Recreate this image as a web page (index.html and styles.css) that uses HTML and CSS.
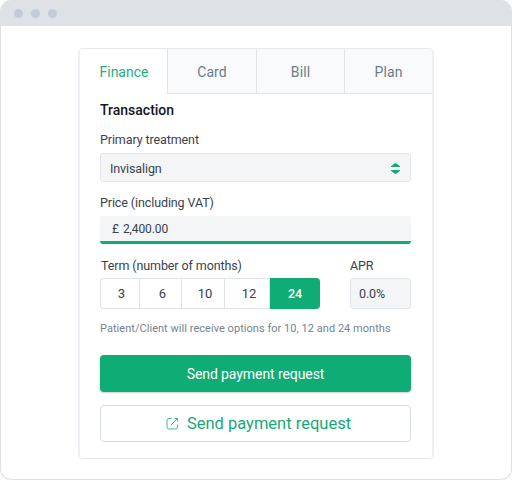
FILE: index.html
```html
<!DOCTYPE html>
<html lang="en">
<head>
<meta charset="utf-8">
<title>Payment request</title>
<link rel="stylesheet" href="styles.css">
</head>

<body>
<div class="window">
    <div class="window_bar"><i></i><i></i><i></i></div>
    <div class="card">
        <nav class="tabs">
            <a class="tab active">Finance</a>
            <a class="tab">Card</a>
            <a class="tab">Bill</a>
            <a class="tab">Plan</a>
        </nav>
        <div class="card_con">
            <h2>Transaction</h2>
            <div class="label label_treatment">Primary treatment</div>
            <div class="field select">
                <span>Invisalign</span>
                <svg width="9" height="11" viewBox="0 0 9 11"><path d="M0 4V3.300L3.500.6Q4.500 0 5.500.6L9 3.300V4zM0 7h9v.7L5.500 10.400Q4.500 11 3.500 10.400L0 7.700z" fill="#0fab75"/></svg>
            </div>
            <div class="label label_price">Price (including VAT)</div>
            <div class="field price"><b>£</b><span>2,400.00</span></div>
            <div class="row">
                <div class="term">
                    <div class="label">Term (number of months)</div>
                    <div class="months">
                        <span>3</span>
                        <span>6</span>
                        <span>10</span>
                        <span>12</span>
                        <span class="on">24</span>
                    </div>
                </div>
                <div class="apr">
                    <div class="label">APR</div>
                    <div class="field">0.0%</div>
                </div>
            </div>
            <p class="hint">Patient/Client will receive options for 10, 12 and 24 months</p>
            <a class="btn btn_main">Send payment request</a>
            <a class="btn btn_line">
                <svg width="13" height="13" viewBox="0 0 13 13" fill="none" stroke="#3fb98f"><path d="M5.500 1.500H3a2 2 0 0 0-2 2V10a2 2 0 0 0 2 2h6.500a2 2 0 0 0 2-2V7.500M5 8l6.500-6.500M8.500 1.500h3v3"/></svg>
                <span>Send payment request</span>
            </a>
        </div>
    </div>
</div>
</body>
</html>
```
FILE: styles.css
```css
* {
	box-sizing:border-box;
}
body {
	margin:0;
	background:#fff;
	font-family:Roboto, "Liberation Sans", sans-serif;
	font-size:13px;
	color:#39424e;
}
.window {
	width:512px;
	height:480px;
	border:1px solid #dfe2e7;
	border-top:0;
	border-radius:11px;
	overflow:hidden;
}
.window_bar {
	display:flex;
	align-items:center;
	gap:8px;
	height:26px;
	padding:1px 0 0 13px;
	background:#dee2e6;
}
.window_bar i {
	width:9px;
	height:9px;
	border-radius:50%;
	background:#c3ccd6;
}
.card {
	width:356px;
	height:411px;
	margin:22px 0 0 77px;
	border:1px solid #e6e8ee;
	border-width:1px 2px;
	border-left-color:#eeeff4;
	border-right-color:#eeeff2;
	border-radius:5px;
	overflow:hidden;
}
.tabs {
	display:grid;
	grid-template-columns:87px 89px 88px 88px;
	height:45px;
}
.tab {
	display:flex;
	align-items:center;
	justify-content:center;
	padding-top:2px;
	border-left:1px solid #e1e5e9;
	border-bottom:1px solid #e1e5e9;
	background:#f9fafc;
	font-size:14px;
	letter-spacing:.1px;
	color:#6b7c8a;
}
.tab.active {
	border-color:transparent;
	background:#fff;
	letter-spacing:0;
	color:#1fae7c;
}
.card_con {
	padding:6px 21px 0 20px;
}
h2 {
	margin:0;
	font-size:14px;
	line-height:20px;
	font-weight:500;
	color:#111827;
}
.label {
	height:16px;
	line-height:16px;
	font-size:12.5px;
	letter-spacing:-.1px;
	white-space:nowrap;
}
.label_treatment {
	margin-top:12px;
}
.label_price {
	margin-top:13px;
}
.field {
	display:flex;
	align-items:center;
	border:1px solid #e3e7eb;
	border-radius:3px;
	background:#f4f5f7;
	font-size:12.5px;
	letter-spacing:-.1px;
}
.select {
	justify-content:space-between;
	height:29px;
	margin-top:5px;
	padding:1px 10px 0 9px;
}
.price {
	height:28px;
	margin-top:5px;
	padding:1px 12px 0;
	border:0;
	border-bottom:3px solid #10ac75;
	font-size:12px;
	gap:4px;
}
.price b {
	font-weight:400;
}
.row {
	display:flex;
	justify-content:space-between;
	margin-top:14px;
}
.term .label {
	padding-left:1px;
}
.months {
	display:grid;
	grid-template-columns:40px 42px 43px 45px 50px;
	height:31px;
	margin-top:4px;
	border-radius:4px;
	overflow:hidden;
	box-shadow:inset 0 0 0 1px #dfe3ea;
}
.months span {
	display:flex;
	align-items:center;
	justify-content:center;
	padding-left:4px;
	border-right:1px solid #dfe3ea;
}
.months .on {
	padding-left:0;
	border:0;
	background:#10ac75;
	color:#fff;
	font-size:12.5px;
	font-weight:500;
}
.apr {
	width:61px;
}
.apr .field {
	height:31px;
	margin-top:4px;
	padding-left:8px;
}
.hint {
	margin:13px 0 0;
	line-height:14px;
	font-size:11px;
	letter-spacing:.04px;
	white-space:nowrap;
	color:#74838f;
}
.btn {
	display:flex;
	align-items:center;
	justify-content:center;
	height:37px;
	border-radius:4px;
}
.btn_main {
	margin-top:19px;
	background:#10ac75;
	box-shadow:0 1px 2px rgba(0,0,0,.2);
	font-size:14px;
	letter-spacing:-.08px;
	color:#fff;
}
.btn_line {
	gap:8px;
	margin-top:13px;
	padding-left:6px;
	border:1px solid #d5dce2;
	font-size:16.5px;
	color:#16a876;
}
```
